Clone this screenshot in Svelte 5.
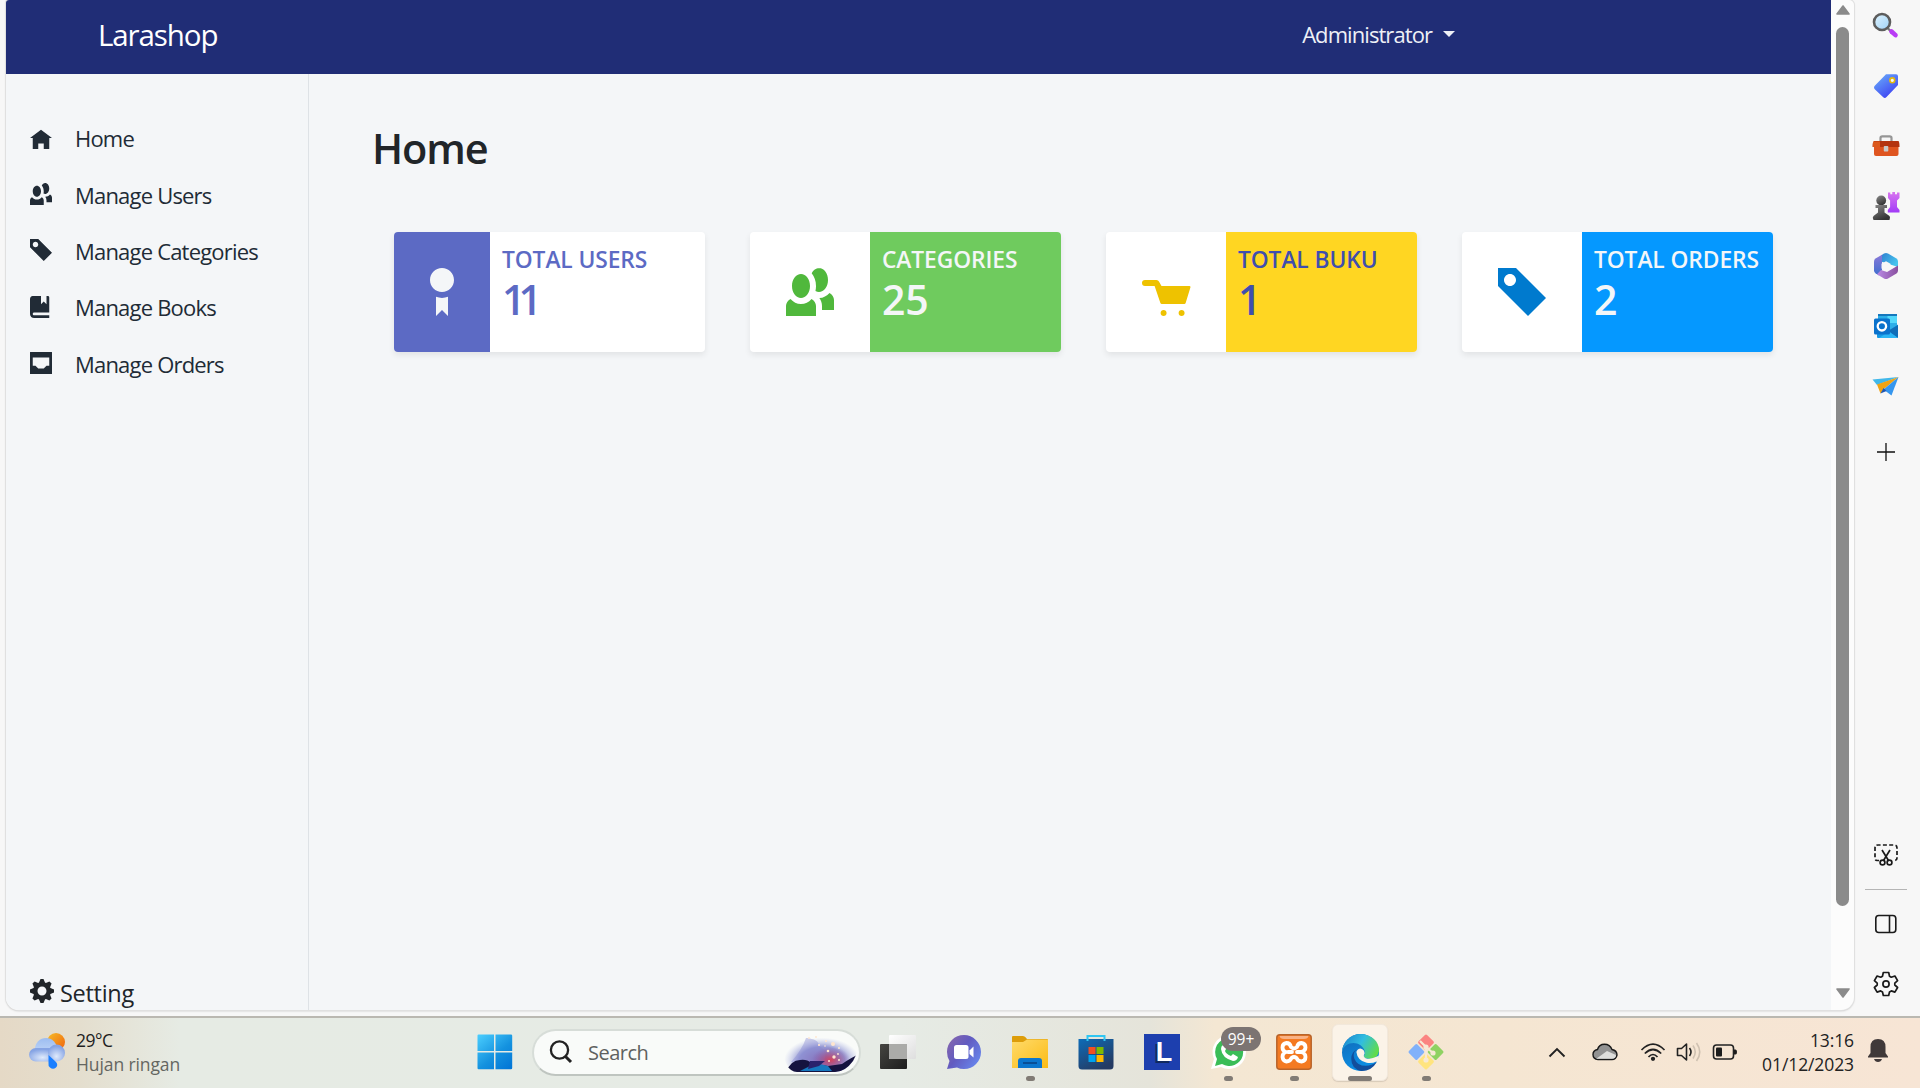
<script>
  const glyphs = {
    home: 'M4 1l-4 3h1v4h2v-2h2v2h2v-4.03l1 .03-4-3z',
    people:
      'M5.5 0c-.51 0-.95.35-1.22.88.45.54.72 1.28.72 2.13 0 .29-.03.55-.09.81.19.11.38.19.59.19.83 0 1.5-.9 1.5-2s-.67-2-1.5-2zm-3 1c-.83 0-1.5.9-1.5 2s.67 2 1.5 2 1.5-.9 1.5-2-.67-2-1.5-2zm4.75 3.16c-.43.51-1.02.82-1.69.84.27.38.44.84.44 1.34v.66h2v-1.66c0-.52-.31-.97-.75-1.19zm-6.5 1c-.44.22-.75.67-.75 1.19v1.66h5v-1.66c0-.52-.31-.97-.75-1.19-.45.53-1.06.84-1.75.84s-1.3-.32-1.75-.84z',
    tag: 'M0 0v3l5 5 3-3-5-5h-3zm2 1c.55 0 1 .45 1 1s-.45 1-1 1-1-.45-1-1 .45-1 1-1z',
    book: 'M1 0l-.09.03c-.45.08-.8.43-.88.88l-.03.09v5.5c0 .83.67 1.5 1.5 1.5h5.5v-1h-5.5c-.28 0-.5-.22-.5-.5s.22-.5.5-.5h5.5v-5.5c0-.28-.22-.5-.5-.5h-.5v3l-1-1-1 1v-3h-3z',
    inbox:
      'M.1 0H7.9Q8 0 8 .1V7.9Q8 8 7.9 8H.1Q0 8 0 7.9V.1Q0 0 .1 0zM1 2v3h1l1 1h2l1-1h1v-3z',
    cog: 'M3.5 0l-.5 1.19c-.1.03-.19.08-.28.13l-1.19-.5-.72.72.5 1.19c-.05.1-.09.18-.13.28l-1.19.5v1l1.19.5c.04.1.08.18.13.28l-.5 1.19.72.72 1.19-.5c.09.04.18.09.28.13l.5 1.19h1l.5-1.19c.09-.04.19-.08.28-.13l1.19.5.72-.72-.5-1.19c.04-.09.09-.19.13-.28l1.19-.5v-1l-1.19-.5c-.03-.09-.08-.19-.13-.28l.5-1.19-.72-.72-1.19.5c-.09-.04-.19-.09-.28-.13l-.5-1.19h-1zm.5 2.5c.83 0 1.5.67 1.5 1.5s-.67 1.5-1.5 1.5-1.5-.67-1.5-1.5.67-1.5 1.5-1.5z',
    badge:
      'M4 0c-1.1 0-2 .9-2 2s.9 2 2 2 2-.9 2-2-.9-2-2-2zm-1 4.81v3.19l1-1 1 1v-3.19c-.31.11-.65.19-1 .19s-.69-.08-1-.19z',
    cart: 'M.5 2a.5.5 0 0 0 0 1h1.6l.95 2.8q.07.2.25.2h3.75q.18 0 .24-.2L8.080 3.200Q8.100 3 7.900 3H3.250l-.4-.72a.5.5 0 0 0-.44-.28zM3.600 7c-.28 0-.5.22-.5.5s.22.5.5.5.5-.22.5-.5-.22-.5-.5-.5zm3 0c-.28 0-.5.22-.5.5s.22.5.5.5.5-.22.5-.5-.22-.5-.5-.5z'
  };

  const menu = [
    { icon: 'home', label: 'Home' },
    { icon: 'people', label: 'Manage Users' },
    { icon: 'tag', label: 'Manage Categories' },
    { icon: 'book', label: 'Manage Books' },
    { icon: 'inbox', label: 'Manage Orders' }
  ];

  const stats = [
    { kind: 'users', icon: 'badge', title: 'TOTAL USERS', value: 11 },
    { kind: 'categories', icon: 'people', title: 'CATEGORIES', value: 25 },
    { kind: 'books', icon: 'cart', title: 'TOTAL BUKU', value: 1 },
    { kind: 'orders', icon: 'tag', title: 'TOTAL ORDERS', value: 2 }
  ];
</script>

{#snippet glyph(name)}
  <svg class="glyph" viewBox="0 0 8 8"><path fill="currentColor" fill-rule="evenodd" d={glyphs[name]} /></svg>
{/snippet}

<div class="screen">
  <div class="browser">
    <div class="page">
      <div class="app">
        <header class="navbar">
          <span class="brand">Larashop</span>
          <span class="account">Administrator <i class="caret"></i></span>
        </header>
        <div class="body">
          <aside class="sidebar">
            <nav>
              {#each menu as item}
                <div class="nav-item">{@render glyph(item.icon)}<span>{item.label}</span></div>
              {/each}
            </nav>
            <div class="setting">{@render glyph('cog')}<span>Setting</span></div>
          </aside>
          <main>
            <h1>Home</h1>
            <div class="cards">
              {#each stats as s}
                <section class="card {s.kind}">
                  <div class="card-icon">{@render glyph(s.icon)}</div>
                  <div class="card-text">
                    <div class="card-title">{s.title}</div>
                    <div class="card-value">{s.value}</div>
                  </div>
                </section>
              {/each}
            </div>
          </main>
        </div>
      </div>
      <div class="scrollbar">
        <svg width="14" height="10" viewBox="0 0 14 10"><path d="M7 1 13 9H1z" fill="#8b8b8b" stroke="#8b8b8b" stroke-width="1.6" stroke-linejoin="round" /></svg>
        <div class="thumb"></div>
        <svg width="14" height="10" viewBox="0 0 14 10"><path d="M7 9 13 1H1z" fill="#8b8b8b" stroke="#8b8b8b" stroke-width="1.6" stroke-linejoin="round" /></svg>
      </div>
    </div>

    <div class="rail">
      <div class="rail-slot">
        <svg width="28" height="28" viewBox="0 0 28 28">
          <defs><linearGradient id="lens" x1="0" y1="0" x2="1" y2="1"><stop offset="0" stop-color="#dff3ff" /><stop offset="1" stop-color="#9fd2f5" /></linearGradient></defs>
          <path d="M15.500 16l4 4" stroke="#777" stroke-width="2.4" />
          <path d="M19.500 19.500l4 3.600" stroke="#b93cf5" stroke-width="4.6" stroke-linecap="round" />
          <circle cx="10" cy="10" r="8" fill="url(#lens)" stroke="#5d5d5d" stroke-width="2.6" />
        </svg>
      </div>
      <div class="rail-slot">
        <svg width="28" height="28" viewBox="0 0 28 28">
          <defs><linearGradient id="rtag" x1="0" y1="0" x2=".7" y2="1"><stop offset="0" stop-color="#6cb4fa" /><stop offset="1" stop-color="#3d40f2" /></linearGradient></defs>
          <path d="M14 2.3H24Q26 2.3 26 4.3V13L14.5 25Q12.8 26.8 11 25L3 17.5Q1 15.700 3 13.600z" fill="url(#rtag)" />
          <circle cx="20.300" cy="8.300" r="2.400" fill="#f2f6ff" stroke="#e3b70d" stroke-width="1.600" />
        </svg>
      </div>
      <div class="rail-slot">
        <svg width="28" height="28" viewBox="0 0 28 28">
          <path d="M8.500 10V6Q8.500 4.300 10.300 4.300H17.700Q19.500 4.300 19.500 6V10" fill="none" stroke="#969696" stroke-width="2.200" />
          <rect x="2" y="9" width="24.500" height="15" rx="2" fill="#df5520" />
          <path d="M2 9H26.500Q27.500 10 27.500 15H.5Q.5 10 2 9z" fill="#b43410" />
          <path d="M1 9.500H8V15H1z" fill="#ef6d25" opacity=".65" />
          <rect x="11.800" y="14" width="4.500" height="5.500" rx=".8" fill="#c9c9c9" />
        </svg>
      </div>
      <div class="rail-slot">
        <svg width="28" height="30" viewBox="0 0 28 30">
          <defs>
            <linearGradient id="pawn" x1="0" y1="0" x2=".5" y2="1"><stop offset="0" stop-color="#8a8a8a" /><stop offset="1" stop-color="#353535" /></linearGradient>
            <linearGradient id="rook" x1="0" y1="0" x2="0" y2="1"><stop offset="0" stop-color="#d875ef" /><stop offset="1" stop-color="#a23bf7" /></linearGradient>
          </defs>
          <path d="M16 1.500h2.300v1.700h2V1h2.700v2.200h2V1.500H27.500V7L25 9.500V16l2.500 3V21.500H15.800V19l2.300-3V9.500L16 7z" fill="url(#rook)" />
          <g fill="url(#pawn)"><circle cx="9.200" cy="9.500" r="4.900" /><path d="M3.500 14H15v3H12.500V21.500L17.500 25q1 1.200 0 4H1.500q-1.500-2.500 0-4L6 21.500V17H3.500z" /></g>
        </svg>
      </div>
      <div class="rail-slot">
        <svg width="28" height="28" viewBox="0 0 28 28">
          <defs>
            <linearGradient id="hexTop" x1="0" y1="0" x2="1" y2=".6"><stop offset="0" stop-color="#2f7fd0" /><stop offset="1" stop-color="#46c4ee" /></linearGradient>
            <linearGradient id="hexLeft" x1="0" y1="0" x2="0" y2="1"><stop offset="0" stop-color="#8a78d8" /><stop offset="1" stop-color="#3e6fce" /></linearGradient>
            <linearGradient id="hexLow" x1="0" y1="0" x2="1" y2="0"><stop offset="0" stop-color="#b98ae4" /><stop offset="1" stop-color="#8a4f9f" /></linearGradient>
          </defs>
          <path d="M12 1.500Q14 .4 16 1.500L24.500 6.500Q26 7.500 26 9.500V15L9 9.500V3.500z" fill="url(#hexTop)" />
          <path d="M10 2.800V18L7 23.500 3.500 21.300Q2 20.300 2 18.500V9.500Q2 7.500 3.500 6.500z" fill="url(#hexLeft)" />
          <path d="M9 18 15 20 26 13.500V18.500Q26 20.500 24.500 21.500L16 26.500Q14 27.600 12 26.500L5 22.300z" fill="url(#hexLow)" />
          <path d="M14 9.200 18.500 11.700V16.500L14 19 9.500 16.500V11.700z" fill="#f7f7f7" />
        </svg>
      </div>
      <div class="rail-slot">
        <svg width="28" height="28" viewBox="0 0 28 28">
          <rect x="6" y="2" width="19" height="18" rx="1.200" fill="#2caee8" /><path d="M15.500 2H24Q25 2 25 3V11H15.500z" fill="#53d8fb" />
          <path d="M6 2H25V4H6z" fill="#1578bd" /><path d="M5 13 16 19 26 12.500V25Q26 26 25 26H6Q5 26 5 25z" fill="#1599e5" /><path d="M16 19 26 13V26z" fill="#0f6db8" />
          <path d="M7 26 17 19.500 26 26z" fill="#2bb5f4" />
          <rect x="2" y="6.500" width="16" height="16" rx="1.500" fill="#0a72cc" /><circle cx="9.900" cy="14.300" r="4.200" fill="none" stroke="#fff" stroke-width="2.300" />
        </svg>
      </div>
      <div class="rail-slot">
        <svg width="28" height="28" viewBox="0 0 28 28">
          <path d="M.5 7.500 26.500 5 5 13z" fill="#41b8ea" /><path d="M26.500 5 5 12.500 8.500 21.500 12 17z" fill="#f0a313" />
          <path d="M26.500 5 11.500 17.500 19.500 23.500z" fill="#3596ee" /><path d="M8.500 21.500 11.500 16 14.500 19z" fill="#1f56b4" />
        </svg>
      </div>
      <div class="rail-slot plus">
        <svg width="20" height="20" viewBox="0 0 20 20"><path d="M10 1V19M1 10H19" stroke="#111" stroke-width="1.300" /></svg>
      </div>
      <div class="rail-bottom">
        <svg width="28" height="26" viewBox="0 0 28 26" fill="none" stroke="#1a1a1a" stroke-width="1.700">
          <path d="M7 18.500H5Q3 18.500 3 16V6Q3 3 6 3H22Q25 3 25 6V16Q25 18.500 22.500 18.500H21" stroke-dasharray="4 2.300" />
          <path d="M10 8 16.500 18.500M18 8 11.500 18.500" /><circle cx="10.500" cy="20.500" r="2.400" /><circle cx="17.500" cy="20.500" r="2.400" />
        </svg>
        <div class="divider"></div>
        <svg width="24" height="20" viewBox="0 0 24 20" fill="none" stroke="#1a1a1a" stroke-width="1.600"><rect x="1.800" y="1.500" width="20" height="17" rx="3" /><path d="M15.500 1.500V18.500" /></svg>
        <svg class="rail-gear" width="28" height="28" viewBox="0 0 28 28" fill="none" stroke="#1a1a1a" stroke-width="1.700" stroke-linejoin="round">
          <path d="M11.300 2.500h5.400l.8 3.700 1.800 1 3.600-1.200 2.700 4.600-2.800 2.500v1.900l2.800 2.500-2.700 4.600-3.600-1.200-1.800 1-.8 3.600h-5.400l-.8-3.600-1.800-1-3.600 1.200-2.700-4.600L5.200 15v-1.900l-2.800-2.500 2.700-4.600 3.600 1.200 1.800-1z" /><circle cx="14" cy="14" r="3.100" />
        </svg>
      </div>
    </div>
  </div>

  <footer class="taskbar">
    <div class="weather">
      <svg width="38" height="38" viewBox="0 0 38 38">
        <defs>
          <linearGradient id="sun" x1="0" y1="0" x2="1" y2="1"><stop offset="0" stop-color="#f6bd28" /><stop offset="1" stop-color="#f0600c" /></linearGradient>
          <linearGradient id="cloud" x1="0" y1="0" x2="0" y2="1"><stop offset="0" stop-color="#9dbdf1" /><stop offset="1" stop-color="#cfe0fa" /></linearGradient>
          <radialGradient id="puff" cx=".5" cy=".7" r=".6"><stop offset="0" stop-color="#dfeafc" /><stop offset="1" stop-color="#86a4e4" /></radialGradient>
        </defs>
        <circle cx="28" cy="10" r="9" fill="url(#sun)" />
        <circle cx="18" cy="17" r="11" fill="url(#cloud)" />
        <rect x="1" y="16" width="27" height="13.500" rx="6.750" fill="url(#puff)" />
        <circle cx="28.500" cy="21" r="8.500" fill="url(#puff)" />
        <path d="M20.500 23 28 30Q30.500 33 28 35.500 25 38 22 35.500 20 34 20.500 31z" fill="#1a7fff" />
      </svg>
      <div><div class="temp">29°C</div><div class="desc">Hujan ringan</div></div>
    </div>

    <div class="dock">
      <div class="slot">
        <svg width="36" height="36" viewBox="0 0 36 36">
          <defs><linearGradient id="win" gradientUnits="userSpaceOnUse" x1="0" y1="0" x2="30" y2="36"><stop offset="0" stop-color="#4dd0ff" /><stop offset=".6" stop-color="#1492df" /><stop offset="1" stop-color="#0377d7" /></linearGradient></defs>
          <path d="M1.500.5H17V17H.5V1.500Q.5.500 1.500.500zM18.500.5H34Q35.200.5 35.200 1.500V17H18.500zM.5 18.500H17V35.200H1.500Q.5 35.200.5 34zM18.500 18.500H35.200V34Q35.200 35.200 34 35.200H18.500z" fill="url(#win)" />
        </svg>
      </div>
      <div class="search">
        <svg width="24" height="24" viewBox="0 0 24 24" fill="none" stroke="#222" stroke-width="2.300"><circle cx="10.500" cy="10" r="8.600" /><path d="M16.500 16.500 22 22" stroke-width="3" /></svg>
        <span>Search</span>
        <svg class="art" width="78" height="40" viewBox="0 0 78 40">
          <defs>
            <radialGradient id="sky" cx=".5" cy=".6" r=".5"><stop offset="0" stop-color="#855ea8" /><stop offset=".6" stop-color="#8b8ed0" stop-opacity=".9" /><stop offset="1" stop-color="#b9c0e8" stop-opacity="0" /></radialGradient>
            <radialGradient id="glow" cx=".5" cy=".5" r=".5"><stop offset="0" stop-color="#e53c4c" /><stop offset="1" stop-color="#7c4ca0" stop-opacity="0" /></radialGradient>
            <clipPath id="pill"><path d="M0 0H76Q77 18 70 29 62 40 52 40H14Q8 40 0 30z" /></clipPath>
          </defs>
          <g clip-path="url(#pill)">
            <ellipse cx="39" cy="24" rx="38" ry="23" fill="url(#sky)" />
            <path d="M23 6Q36 7 36 14 45 18 41 30H8Q19 18 23 6z" fill="#8587d3" opacity=".4" />
            <ellipse cx="48" cy="28" rx="19" ry="13" fill="url(#glow)" opacity=".85" />
            <path d="M3 40Q8 28 17 28 24 27 28 31L45 34 59 32Q72 23 78 22V40z" fill="#15133f" />
            <path d="M17 39 33 31 45 34 49 39z" fill="#1678bf" /><path d="M27 29 42 29 36 34 25 37z" fill="#2a226c" />
            <g fill="#ffe6cf"><circle cx="26" cy="6" r=".9" /><circle cx="33" cy="5" r=".9" /><circle cx="36" cy="13" r="1.100" /><circle cx="43" cy="9" r="1.100" /><circle cx="50" cy="12" r="2" /><circle cx="45" cy="19" r="1.300" /><circle cx="51" cy="25" r="1.700" /><circle cx="56" cy="16" r="1" /><circle cx="46" cy="29" r="1" /><circle cx="56" cy="28" r="1" /><circle cx="42" cy="14" r=".8" /><circle cx="55" cy="22" r=".9" /></g>
          </g>
        </svg>
      </div>
      <div class="slot">
        <svg width="36" height="36" viewBox="0 0 36 36">
          <defs>
            <linearGradient id="tvd" x1="0" y1="0" x2="1" y2="1"><stop offset="0" stop-color="#454541" /><stop offset="1" stop-color="#1d1d1d" /></linearGradient>
            <linearGradient id="tvl" x1="0" y1="0" x2="1" y2="1"><stop offset="0" stop-color="#ffffff" /><stop offset="1" stop-color="#dedede" /></linearGradient>
          </defs>
          <rect x="0" y="10" width="27" height="25" rx="1" fill="url(#tvd)" />
          <rect x="9" y="1" width="27" height="24" rx="1" fill="url(#tvl)" />
          <path d="M9 10H27V25H10Q9 25 9 24z" fill="#ababa9" />
        </svg>
      </div>
      <div class="slot">
        <svg width="36" height="36" viewBox="0 0 36 36">
          <defs><linearGradient id="chat" x1="0" y1="0" x2="1" y2=".7"><stop offset="0" stop-color="#8c68aa" /><stop offset=".5" stop-color="#625bc0" /><stop offset="1" stop-color="#6784eb" /></linearGradient></defs>
          <path d="M18 1C27 1 35 8.500 35 18S27.500 35 18 35Q14 35 11 33.500L1 35 3.500 27Q1 23 1 18C1 8.500 8.500 1 18 1z" fill="url(#chat)" />
          <rect x="8" y="11" width="14.500" height="14" rx="2.500" fill="#fff" /><path d="M23.500 16.500 27.500 12.500V23.500L23.500 20z" fill="#fff" />
        </svg>
      </div>
      <div class="slot">
        <svg width="36" height="36" viewBox="0 0 36 36">
          <defs><linearGradient id="fold" x1="0" y1="0" x2="1" y2="1"><stop offset="0" stop-color="#ffdb6b" /><stop offset="1" stop-color="#fbbb15" /></linearGradient></defs>
          <path d="M0 3Q0 2 1 2H11Q13 2 15 5H35Q36 5 36 6V12H0z" fill="#dd9d0a" /><path d="M0 8H11L15 5.500H36V34H0z" fill="url(#fold)" />
          <path d="M6 34V27Q6 24 9 24H27Q30 24 30 27V34z" fill="#0c76cd" /><path d="M11 29H25" stroke="#0a4b90" stroke-width="1.800" />
        </svg>
        <i class="dot"></i>
      </div>
      <div class="slot">
        <svg width="36" height="36" viewBox="0 0 36 36">
          <defs><linearGradient id="store" x1="0" y1="0" x2=".6" y2="1"><stop offset="0" stop-color="#0e6cb8" /><stop offset="1" stop-color="#253b63" /></linearGradient></defs>
          <path d="M.5 5H35.500V32Q35.500 35.500 32 35.500H4Q.5 35.500.5 32z" fill="url(#store)" /><path d="M9.500 7V2H26.500V7" fill="none" stroke="#30c6f2" stroke-width="2" />
          <path d="M10.500 13H17.500V20H10.500z" fill="#f25022" /><path d="M18.500 13H25.500V20H18.500z" fill="#7fba00" /><path d="M10.500 21H17.500V28H10.500z" fill="#00a4ef" /><path d="M18.500 21H25.500V28H18.500z" fill="#ffb900" />
        </svg>
      </div>
      <div class="slot"><div class="l-app">L</div></div>
      <div class="slot">
        <svg width="36" height="38" viewBox="0 0 36 38">
          <path d="M19 2A17 17 0 1 1 11 34L1 36 4 26A17 17 0 0 1 19 2z" fill="#fff" /><path d="M19 5A14 14 0 1 1 12 31L5 33 7 26A14 14 0 0 1 19 5z" fill="#3abd57" />
          <path d="M13 12Q11 13 11 16 12 25 23 28 27 28 28 24L23 21 21 23Q16 21 15 18L16 16 15 12z" fill="#fff" />
        </svg>
        <span class="count">99+</span><i class="dot"></i>
      </div>
      <div class="slot">
        <svg width="36" height="36" viewBox="0 0 36 36">
          <rect x=".8" y=".8" width="34.400" height="34.400" rx="3" fill="#f47a22" stroke="#b8642b" stroke-width="1.500" /><path d="M3.500 2H32.500Q32 5 28 5H8Q4 5 3.500 2z" fill="#f9b184" />
          <path d="M15 13Q14 9 10.500 9 6.500 9.500 6.500 13.500 6.500 17 10 18 6.500 19 6.500 23 7 27 10.500 27.500 14 27.500 15.500 24 18 22 20.500 24 22 27.500 25.500 27.500 29.500 27 29.500 23 29.500 19 25 18H21M21 13Q22 9 25.500 9 29.500 9.500 29.500 13.500 29.500 17 25 18M15 13Q18 16 21 13M12 18H16" fill="none" stroke="#fff" stroke-width="3.800" stroke-linejoin="round" stroke-linecap="round" />
        </svg>
        <i class="dot"></i>
      </div>
      <div class="slot">
        <div class="tile">
          <svg width="37" height="37" viewBox="0 0 36 36">
            <defs>
              <linearGradient id="etop" x1="0" y1=".2" x2="1" y2=".6"><stop offset="0" stop-color="#1b86cf" /><stop offset=".5" stop-color="#31bde0" /><stop offset="1" stop-color="#61dc4a" /></linearGradient>
              <linearGradient id="eleft" x1="0" y1="0" x2=".4" y2="1"><stop offset="0" stop-color="#1268b5" /><stop offset="1" stop-color="#0c8fe5" /></linearGradient>
            </defs>
            <circle cx="18" cy="18" r="18" fill="url(#eleft)" />
            <path d="M0 17C1 7 9 0 18 0 29 0 36 8 36 15 36 21 32 24 27 24 22 24 20 22.500 22 20 23 18 22 14 18 11 11 6 2 10 0 17z" fill="url(#etop)" />
            <path d="M14 15Q10 19 12 24 15 31 23 31 29 31 34 27 29 36 19 36 9 34 9 24 9 18 14 15z" fill="#124e9c" />
            <path d="M14 17.500Q15 14 18 14 22 15 22 19 20 22 23 23.500 28 25 34 22L36 21Q36 25 34 26.500 29 29 24 28 15 26 14 17.500z" fill="#fbf3e8" />
          </svg>
        </div>
        <i class="dot wide"></i>
      </div>
      <div class="slot">
        <svg width="38" height="38" viewBox="0 0 38 38">
          <g transform="translate(19 19) rotate(45)"><rect x="-12.800" y="-12.800" width="12" height="12" rx="1.500" fill="#fb8481" /><rect x=".8" y="-12.800" width="12" height="12" rx="1.500" fill="#8fd262" /><rect x="-12.800" y=".8" width="12" height="12" rx="1.500" fill="#81b1fa" /><rect x=".8" y=".8" width="12" height="12" rx="1.500" fill="#ffe47f" /></g>
          <path d="M13 8 19 14V28M19 14 26 20" stroke="#f7e9d5" stroke-width="2.200" fill="none" /><circle cx="19" cy="14" r="2.600" fill="#f7e9d5" /><circle cx="26" cy="20" r="2.600" fill="#f7e9d5" /><circle cx="19" cy="27" r="2.600" fill="#f7e9d5" />
        </svg>
        <i class="dot"></i>
      </div>
    </div>

    <div class="tray">
      <svg class="chevron" width="18" height="11" viewBox="0 0 18 11" fill="none" stroke="#222" stroke-width="1.900"><path d="M1.500 9.500 9 2 16.500 9.500" /></svg>
      <svg class="cloud" width="26" height="18" viewBox="0 0 26 18"><path d="M6 16.500Q1 16 1 11.500 1 7.500 5.500 6.500 7 1.200 12.500 1.200 18 1.200 20 6.500 25 7.500 25 12 24 16.500 20 16.500z" fill="#929292" stroke="#191919" stroke-width="1.400" /><path d="M4 16 15 8 24 12Q24 15.800 20 15.800H6z" fill="#dededc" /></svg>
      <svg class="wifi" width="26" height="20" viewBox="0 0 26 20" fill="none" stroke="#222" stroke-width="1.700"><path d="M1.500 8Q13-3.500 24.500 8M4.800 11.500Q13 3.500 21.200 11.500M8.500 15Q13 10 17.500 15" /><circle cx="13" cy="16.800" r="1.300" fill="#222" /></svg>
      <svg class="sound" width="26" height="22" viewBox="0 0 26 22" fill="none" stroke="#222" stroke-width="1.600"><path d="M1.500 7.500H5.500L10.500 3V19L5.500 14.500H1.500z" stroke-linejoin="round" /><path d="M13.500 7Q16.500 11 13.500 15" /><path d="M17 4.500Q21.500 11 17 17.500M20.500 2Q27 11 20.500 20" stroke="#cfc1b1" /></svg>
      <svg width="26" height="18" viewBox="0 0 26 18"><rect x="1.500" y="2" width="20" height="14" rx="3" fill="none" stroke="#222" stroke-width="1.600" /><rect x="4" y="4.500" width="6" height="9" rx="1" fill="#1c1c1c" /><path d="M22 6.500H23.500Q25 6.500 25 9T23.500 11.500H22z" fill="#1c1c1c" /></svg>
      <div class="clock"><div>13:16</div><div>01/12/2023</div></div>
      <svg class="bell" width="22" height="25" viewBox="0 0 22 25" fill="#403939"><path d="M11 1Q18.500 1 18.500 9V15L21 18.500V19.500H1V18.500L3.500 15V9Q3.500 1 11 1zM7 21H15Q14 24 11 24T7 21z" /></svg>
    </div>
  </footer>
</div>

<style>
  :global(body) { margin: 0; overflow: hidden; }
  .screen { width: 1920px; height: 1088px; display: flex; flex-direction: column; background: #f7f7f7; font-family: "Open Sans", "Noto Sans", sans-serif; }
  .screen :global(*) { box-sizing: border-box; }
  svg { display: block; flex: none; overflow: visible; }
  .browser { height: 1016px; display: flex; }
  .page { width: 1848px; height: 1010px; margin-left: 6px; display: flex; border-radius: 3px 5px 13px 13px; overflow: hidden; background: #fcfcfc; box-shadow: 0 0 0 1px #e0e0e0, 0 1px 2px #bbb; }
  .app { width: 1825px; display: flex; flex-direction: column; background: #f4f6f8; color: #212529; }
  .navbar { height: 74px; background: #202d76; display: flex; align-items: center; justify-content: space-between; padding: 0 376px 6px 92px; color: #fff; }
  .brand { font-size: 29.5px; letter-spacing: -1.1px; }
  .account { font-size: 22px; letter-spacing: -0.93px; display: flex; align-items: center; gap: 11px; color: #eef0f6; }
  .caret { border: 6px solid transparent; border-top-color: #eef0f6; border-bottom: 0; }
  .body { flex: 1; display: flex; }
  .sidebar { width: 304px; border-right: 1px solid #dee2e6; padding: 37px 0 0 24px; display: flex; flex-direction: column; justify-content: space-between; color: #212b36; }
  .nav-item { height: 56.4px; display: flex; align-items: center; gap: 23px; font-size: 22px; letter-spacing: -0.8px; white-space: nowrap; padding-bottom: 2px; }
  .nav-item .glyph { width: 22px; height: 22px; margin-bottom: 1px; }
  .setting { display: flex; align-items: center; gap: 6px; font-size: 23.5px; letter-spacing: -0.3px; height: 35px; color: #212529; }
  .setting .glyph { width: 24px; height: 24px; margin-bottom: 3px; }
  main { flex: 1; padding: 46px 59px 0 63px; }
  h1 { margin: 0; font-size: 41.5px; line-height: 56px; font-weight: 600; letter-spacing: -1.1px; }
  .cards { display: flex; gap: 45px; padding: 56px 0 0 21px; }
  .card { width: 311px; height: 120px; flex: none; display: flex; border-radius: 4px; overflow: hidden; background: #fff; box-shadow: 0 3px 6px rgba(0, 0, 0, .08); margin-left: 1px; margin-right: -1px; }
  .card-icon { width: 120px; display: grid; place-items: center; }
  .card-icon .glyph { width: 48px; height: 48px; }
  .card-text { flex: 1; padding: 11px 0 0 12px; font-weight: 600; white-space: nowrap; }
  .card-title { font-size: 22.8px; line-height: 34px; letter-spacing: -0.1px; }
  .card-value { font-size: 41px; line-height: 48px; letter-spacing: -0.3px; margin-top: -2px; }
  .users .card-icon { width: 96px; background: #5c6ac4; color: #f4f6f8; }
  .users .card-text { color: #5c6ac4; }
  .users .card-value { letter-spacing: -7px; }
  .categories .card-icon { color: #50b83c; }
  .categories .card-text { background: #6fcb5e; color: #f4f6f8; }
  .books .card-icon { color: #eec200; }
  .books .card-text { background: #ffd622; color: #3f4eae; }
  .orders .card-icon { color: #007ace; }
  .orders .card-text { background: #0598ff; color: #f4f6f8; }
  .scrollbar { width: 23px; display: flex; flex-direction: column; align-items: center; padding: 5px 0 12px; }
  .thumb { width: 13px; height: 879px; margin: 12px 0 auto; border-radius: 7px; background: #8b8b8b; }
  .rail { width: 64px; margin-top: -4px; display: flex; flex-direction: column; align-items: center; }
  .rail-slot { height: 60px; display: grid; place-items: center; }
  .plus { height: 72px; }
  .rail-bottom { margin-top: 354px; display: flex; flex-direction: column; align-items: center; }
  .divider { width: 42px; height: 1px; background: #b5b5b5; margin: 21px 0 24px; }
  .rail-gear { margin-top: 36px; }
  .taskbar { height: 72px; border-top: 2px solid #bab8b1; display: flex; align-items: center; background: linear-gradient(90deg, #e5d9c6 0, #e4dece 80px, #e6ebe4 180px, #e6ebe5 900px, #e5e4da 1150px, #f4e7d3 1215px, #f5e6d2 1500px, #f7e5d5 1920px); padding-bottom: 2px; }
  .weather { width: 462px; padding-left: 28px; display: flex; gap: 10px; font-size: 17.5px; line-height: 24px; align-items: center; color: #1e1e1e; }
  .weather svg { margin-top: -2px; }
  .temp { letter-spacing: -0.5px; }
  .desc { color: #646661; letter-spacing: -0.1px; }
  .dock { display: flex; align-items: center; }
  .slot { width: 66px; height: 68px; display: grid; place-items: center; position: relative; }
  .search { width: 329px; height: 47px; margin: 0 4px; border-radius: 24px; border: 2px solid #d7ddd8; border-bottom-color: #bfc5c0; background: #f9fbf9; display: flex; align-items: center; padding-left: 15px; font-size: 20px; letter-spacing: -0.5px; color: #5e615f; }
  .search span { margin-left: 15px; }
  .art { margin: 0 -2px 0 auto; }
  .dot { position: absolute; bottom: 5px; left: 28.500px; width: 9px; height: 5px; border-radius: 3px; background: #817b75; }
  .wide { left: 21px; width: 24px; }
  .tile { width: 56px; height: 57px; border-radius: 6px; background: #fbf3e8; border: 1px solid #f2e8db; box-shadow: 0 1px 1px #d8cab9; display: grid; place-items: center; }
  .l-app { width: 36px; height: 36px; background: #1d3fae; color: #fff; font: 700 27px/36px "Liberation Sans", Arial, sans-serif; text-align: center; padding-left: 4px; text-shadow: -2px 2px #10295f; }
  .count { position: absolute; left: 26px; top: 9px; width: 40px; height: 24px; border-radius: 12px; background: #7c7472; color: #fff; font-size: 15.500px; line-height: 24px; text-align: center; }
  .tray { margin-left: auto; display: flex; align-items: center; padding-right: 31px; }
  .chevron { margin-right: 26px; }
  .cloud { margin-right: 22px; }
  .wifi { margin-right: 10px; }
  .sound { margin-right: 10px; }
  .clock { width: 116px; text-align: right; font-size: 17.5px; line-height: 24px; letter-spacing: -0.1px; color: #222; }
  .bell { margin: -4px 0 0 13px; }
</style>
